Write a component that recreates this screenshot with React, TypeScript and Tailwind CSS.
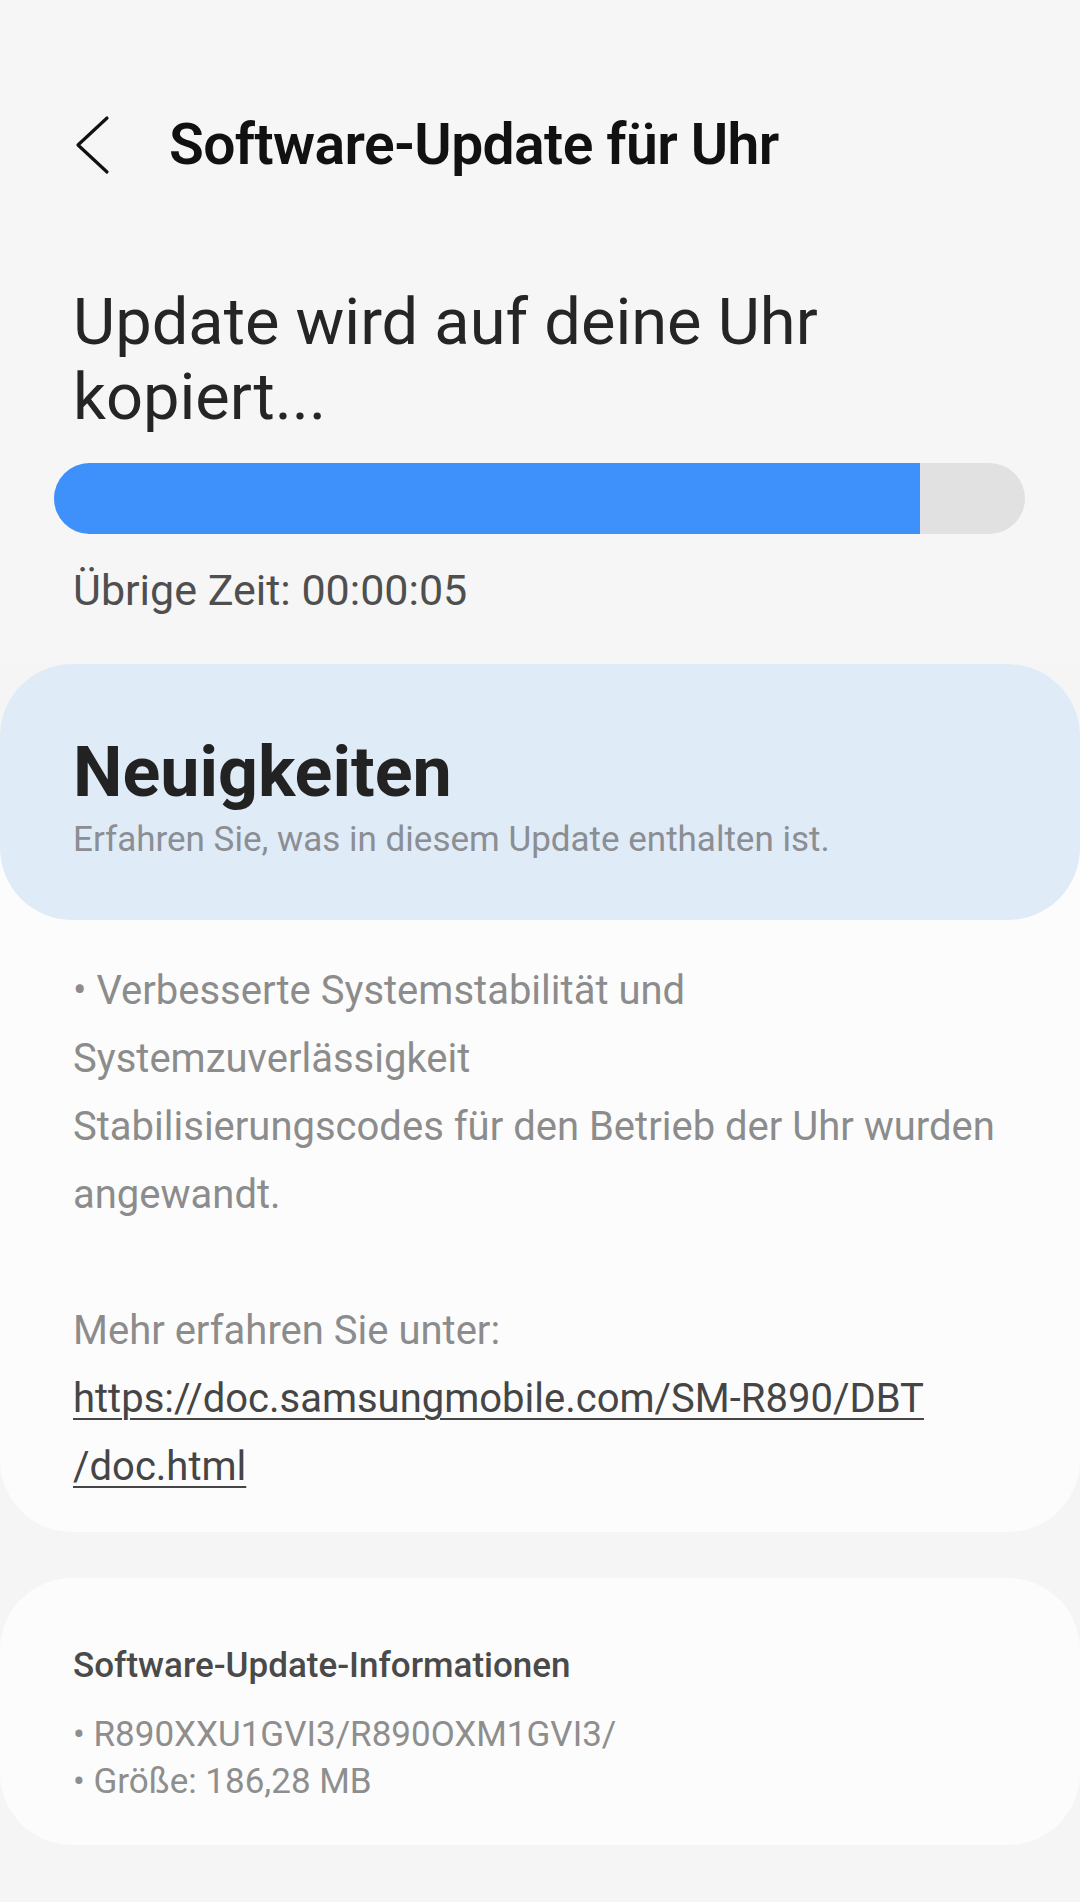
export default function App() {
  const font = { fontFamily: "Roboto, 'Noto Sans', sans-serif" };

  return (
    <div className="min-h-[1902px] w-[1080px] bg-[#f5f5f5]" style={font}>
      {/* header */}
      <div className="bg-[#f6f6f6] pt-[105px]">
        <div className="flex h-[80px] items-center">
          <svg width="40" height="60" viewBox="0 0 40 60" className="ml-[73px]" fill="none">
            <polyline
              points="34,3 5,30 34,57"
              stroke="#111"
              strokeWidth="3.2"
              strokeLinecap="round"
              strokeLinejoin="round"
            />
          </svg>
          <h1 className="ml-[56px] text-[57px] font-semibold leading-[80px] tracking-[-0.6px] text-[#111]">
            Software-Update für Uhr
          </h1>
        </div>

        <div className="px-[73px] pt-[100px]">
          <p className="text-[65px] leading-[75px] text-[#252525]">
            Update wird auf deine Uhr
            <br />
            kopiert...
          </p>
        </div>

        <div className="mx-[54px] mt-[28px] flex h-[71px] w-[971px] overflow-hidden rounded-full bg-[#e1e1e1]">
          <div className="h-full w-[866px] bg-[#3e90fa]" />
        </div>

        <p className="px-[73px] pt-[31px] pb-[49px] text-[43px] leading-[50px] text-[#4f4f4f]">
          Übrige Zeit: 00:00:05
        </p>
      </div>

      {/* what's new */}
      <div className="rounded-[72px] bg-[#fcfcfc]">
        <div className="rounded-[72px] bg-[#e0ebf8] px-[73px] pt-[68px] pb-[59px]">
          <h2 className="text-[70px] font-bold leading-[80px] text-[#222]">Neuigkeiten</h2>
          <p className="mt-[7px] text-[35px] leading-[42px] text-[#8b8e93]">
            Erfahren Sie, was in diesem Update enthalten ist.
          </p>
        </div>
        <div className="px-[73px] pt-[37px] pb-[31px] text-[40px] leading-[68px] text-[#8c8c8c]">
          <p>• Verbesserte Systemstabilität und</p>
          <p>Systemzuverlässigkeit</p>
          <p>Stabilisierungscodes für den Betrieb der Uhr wurden</p>
          <p>angewandt.</p>
          <p>&nbsp;</p>
          <p>Mehr erfahren Sie unter:</p>
          <a href="#" className="block text-[#454545] underline decoration-[2px] underline-offset-[6px]">
            https://doc.samsungmobile.com/SM-R890/DBT
            <br />
            /doc.html
          </a>
        </div>
      </div>

      {/* info */}
      <div className="mt-[46px] rounded-[72px] bg-[#fcfcfc] px-[73px] pt-[67px] pb-[40px]">
        <h3 className="text-[35px] font-medium leading-[42px] text-[#4a4a4a]">
          Software-Update-Informationen
        </h3>
        <div className="mt-[24px] text-[35px] leading-[47px] text-[#8e8e8e]">
          <p>• R890XXU1GVI3/R890OXM1GVI3/</p>
          <p>• Größe: 186,28 MB</p>
        </div>
      </div>
    </div>
  );
}
